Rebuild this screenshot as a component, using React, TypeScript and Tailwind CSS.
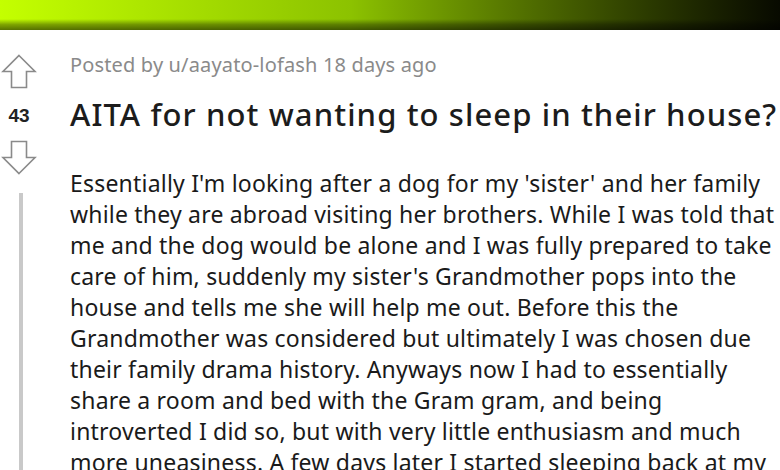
export default function App() {
  const body =
    "Essentially I'm looking after a dog for my 'sister' and her family while they are abroad visiting her brothers. While I was told that me and the dog would be alone and I was fully prepared to take care of him, suddenly my sister's Grandmother pops into the house and tells me she will help me out. Before this the Grandmother was considered but ultimately I was chosen due their family drama history. Anyways now I had to essentially share a room and bed with the Gram gram, and being introverted I did so, but with very little enthusiasm and much more uneasiness. A few days later I started sleeping back at my place.";

  return (
    <div className="w-[780px] h-[470px] overflow-hidden bg-white font-['Noto_Sans','Open_Sans',sans-serif]">
      <div className="h-[30px] flex flex-col bg-linear-to-r from-[#c4ff00] via-[#8cc200] via-45% to-[#080a00]">
        <div className="h-[19px]" />
        <div className="h-[11px] bg-linear-to-b from-black/0 via-black/35 to-black/55" />
      </div>

      <div className="flex">
        <div className="w-[70px] shrink-0 flex flex-col items-start pt-[24px]">
          <svg width="36" height="35" viewBox="0 0 36 35" className="ml-[1px]">
            <path d="M18 1.5 L34 17.5 H25.5 V33.5 H10.5 V17.5 H2 Z" fill="none" stroke="#8a8a8a" strokeWidth="1.6" strokeLinejoin="miter" />
          </svg>
          <div className="w-[38px] mt-[16px] text-center text-[19px] leading-[22px] font-bold text-[#222] font-['Liberation_Sans',sans-serif]">43</div>
          <svg width="36" height="35" viewBox="0 0 36 35" className="ml-[1px] mt-[13px]">
            <path d="M18 33.5 L34 17.5 H25.5 V1.5 H10.5 V17.5 H2 Z" fill="none" stroke="#8a8a8a" strokeWidth="1.6" strokeLinejoin="miter" />
          </svg>
          <div className="ml-[19px] mt-[18px] w-[4px] h-[300px] bg-[#c9c9c9]" />
        </div>

        <div className="flex-1 min-w-0 pt-[21px]">
          <div className="text-[20px] leading-[28px] tracking-[0.15px] text-[#8a8a8a]">Posted by u/aayato-lofash 18 days ago</div>
          <h1 className="mt-[15px] text-[31px] leading-[40px] tracking-[1.1px] font-medium text-[#1c1c1c] whitespace-nowrap">
            AITA for not wanting to sleep in their house?
          </h1>
          <p className="mt-[34px] pr-[2px] text-[23px] leading-[31px] tracking-[0.2px] text-[#1a1a1a]">{body}</p>
        </div>
      </div>
    </div>
  );
}
